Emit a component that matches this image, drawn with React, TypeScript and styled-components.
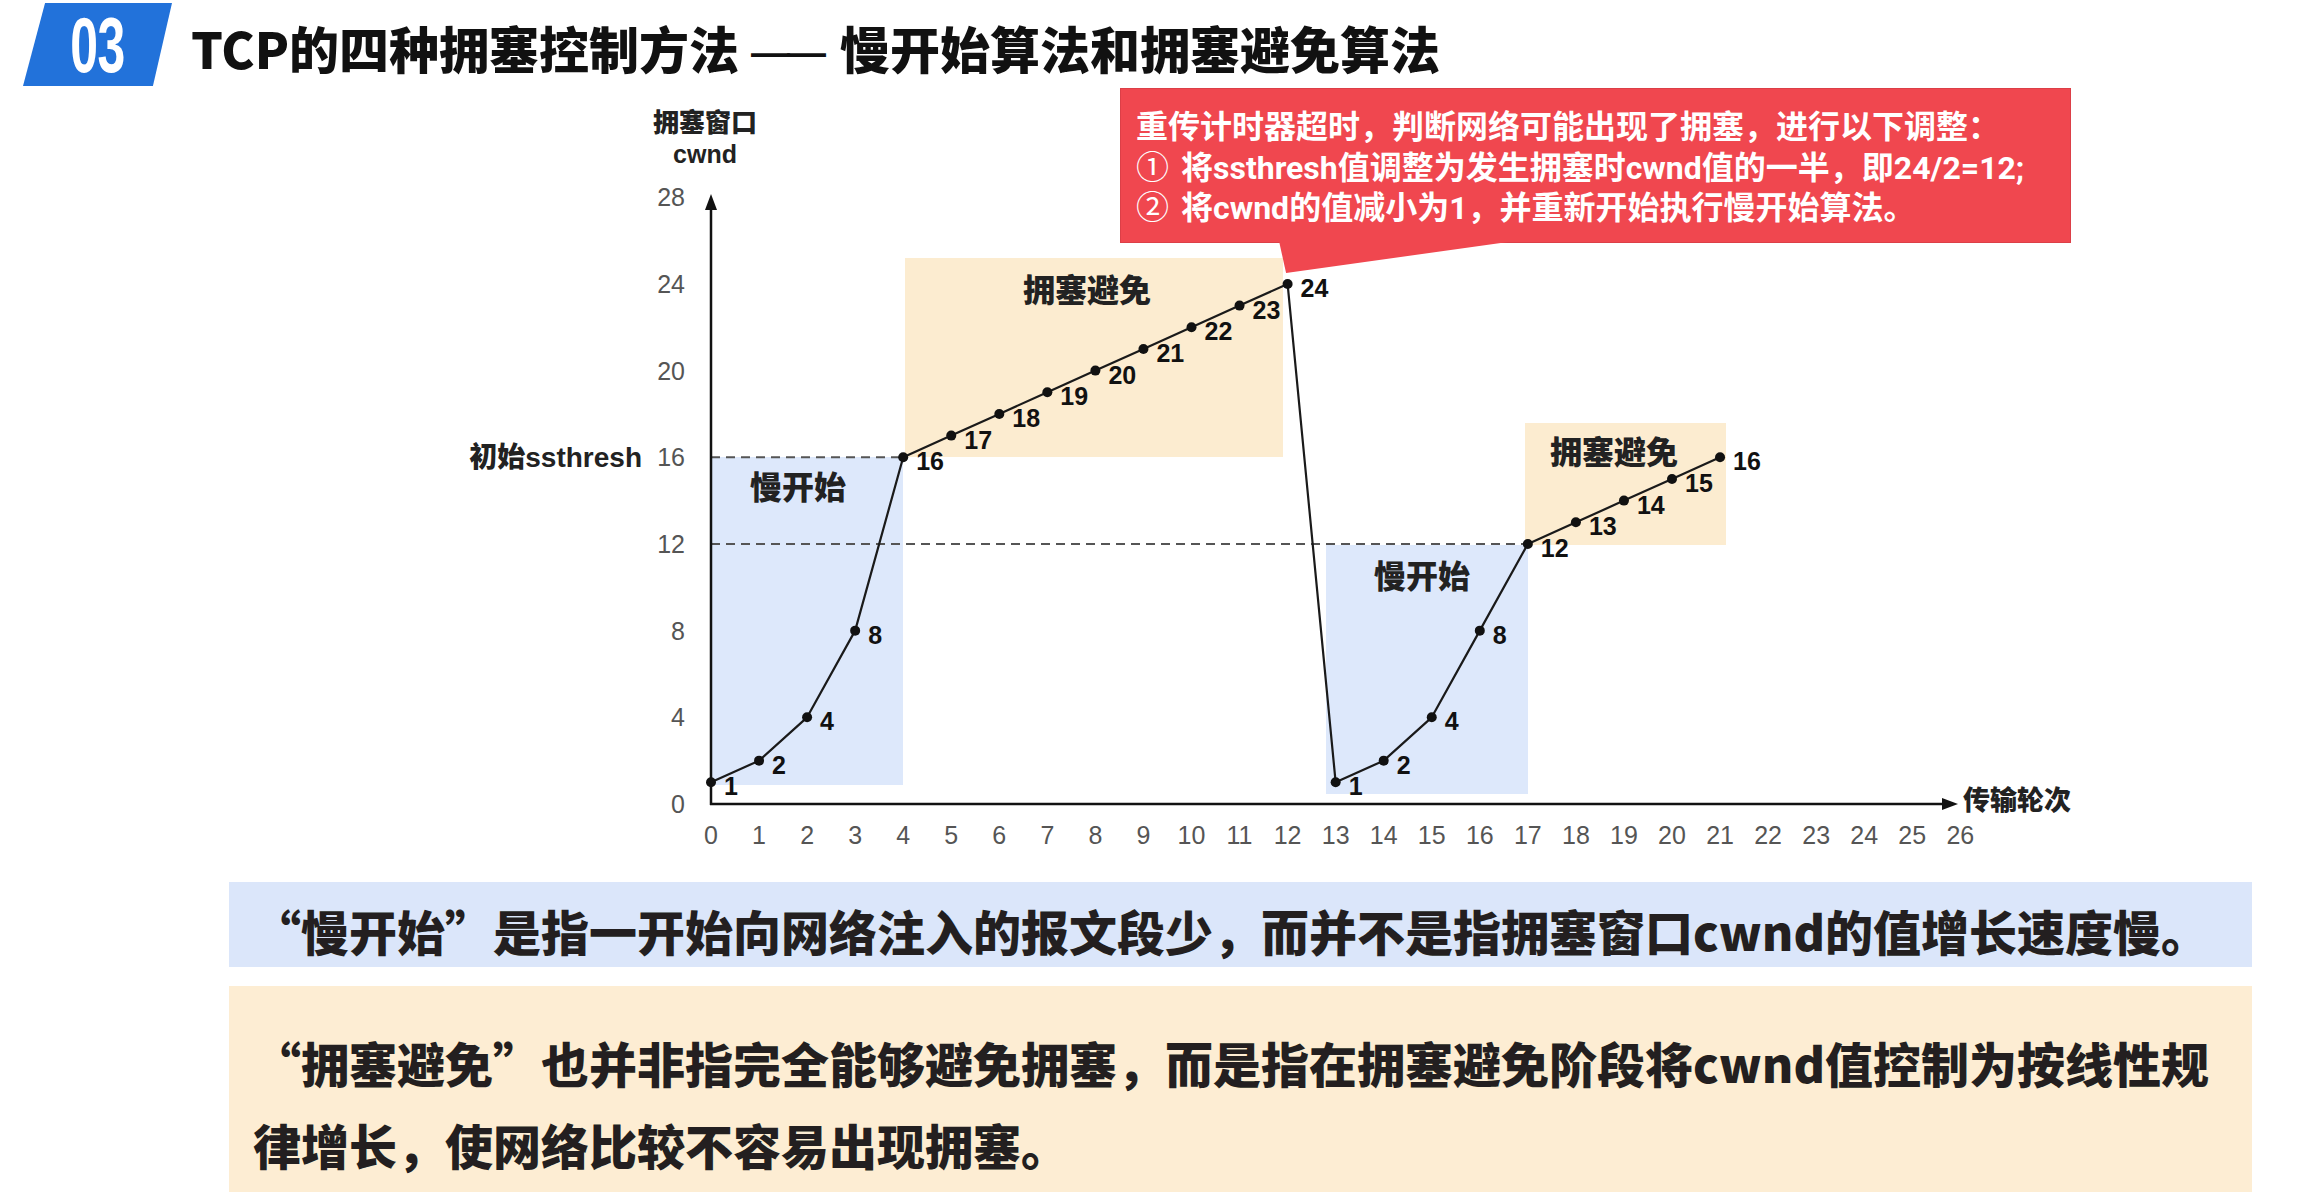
import React from 'react'
import styled, { createGlobalStyle } from 'styled-components'

const GlobalStyle = createGlobalStyle`
  html, body {
    margin: 0;
    padding: 0;
    background: #fff;
  }
  body {
    font-family: "Noto Sans CJK SC", "Noto Sans", sans-serif;
    overflow: hidden;
  }
`

const CJK = `"Noto Sans CJK SC", "Liberation Sans", sans-serif`
const LATIN = `"Liberation Sans", "Noto Sans CJK SC", sans-serif`

const Page = styled.div`
  width: 2303px;
  height: 1201px;
  overflow: hidden;
  background: #fff;
`

const Header = styled.header`
  display: flex;
  align-items: center;
  gap: 19px;
  height: 88px;
  padding: 3px 0 2px 23px;
  box-sizing: border-box;
`

const Badge = styled.div`
  width: 149px;
  height: 83px;
  background: #2272da;
  clip-path: polygon(14.8% 0, 100% 0, 87.2% 100%, 0 100%);
  display: flex;
  align-items: center;
  justify-content: center;
`

const BadgeNum = styled.span`
  font-family: "Liberation Sans", Arial, sans-serif;
  font-weight: 700;
  font-size: 78px;
  line-height: 1;
  color: #fff;
  transform: scaleX(0.64);
  letter-spacing: -1px;
`

const Title = styled.h1`
  margin: 4px 0 0;
  font-family: ${CJK};
  font-weight: 900;
  font-size: 50px;
  color: #111;
  white-space: nowrap;
`

const Dash = styled.span`
  font-family: "Liberation Sans", Arial, sans-serif;
  font-size: 39px;
  font-weight: 700;
  letter-spacing: -3px;
  margin: 0 17px 0 12px;
  position: relative;
  top: -3px;
`

const ChartArea = styled.section`
  position: relative;
  height: 794px;
`

const ChartSvg = styled.svg`
  display: block;
`

const Callout = styled.div`
  position: absolute;
  left: 1120px;
  top: 0;
  width: 951px;
  height: 155px;
  box-sizing: border-box;
  padding: 19px 15px 0;
  background: #f0474f;
  border: 1px solid #dc3f47;
  color: #fff;
  font-family: Roboto, "Noto Sans CJK SC", sans-serif;
  font-weight: 700;
  font-size: 32px;
  line-height: 39.5px;
  white-space: nowrap;

  &::after {
    content: '';
    position: absolute;
    top: calc(100% - 1px);
    left: 158px;
    width: 236px;
    height: 32px;
    background: #f0474f;
    clip-path: polygon(0 0, 3% 100%, 100% 0);
  }
`

const CalloutLine = styled.div``

const Num = styled.span`
  font-weight: 400;
  font-size: 33px;
  margin-right: 12px;
`

const Bands = styled.div`
  display: flex;
  flex-direction: column;
  gap: 19px;
  margin-left: 229px;
  width: 2023px;
`

const Band = styled.div<{ $tone: 'blue' | 'orange' }>`
  box-sizing: border-box;
  background: ${(p) => (p.$tone === 'blue' ? '#dbe6fa' : '#fdedd3')};
  font-family: ${CJK};
  font-weight: 900;
  font-size: 48px;
  color: #231f20;
  white-space: nowrap;
  ${(p) =>
    p.$tone === 'blue'
      ? `height: 85px; padding: 10px 0 0 24px; display: flex; align-items: center;`
      : `height: 206px; padding: 35px 57px 0 24px; line-height: 82px;`}
`

const BandLine = styled.span<{ $justify?: boolean }>`
  display: block;
  text-align: ${(p) => (p.$justify ? 'justify' : 'left')};
  text-align-last: ${(p) => (p.$justify ? 'justify' : 'auto')};
`

const Quote = styled.span<{ $open?: boolean }>`
  display: inline-block;
  width: 1em;
  text-align: ${(p) => (p.$open ? 'right' : 'left')};
`

const TickLabel = styled.text`
  font-family: "Liberation Sans", Arial, sans-serif;
  font-size: 25px;
  fill: #555;
  dominant-baseline: central;
`

const PointLabel = styled.text`
  font-family: "Liberation Sans", Arial, sans-serif;
  font-weight: 700;
  font-size: 25px;
  fill: #111;
  dominant-baseline: central;
`

const ZoneLabel = styled.text<{ $size?: number }>`
  font-family: ${CJK};
  font-weight: 900;
  font-size: ${(p) => p.$size ?? 32}px;
  fill: #222;
  dominant-baseline: central;
`

const Zone = styled.rect<{ $tone: 'blue' | 'orange' }>`
  fill: ${(p) => (p.$tone === 'blue' ? '#dde8fb' : '#fcecd0')};
`

const Guide = styled.line`
  stroke: #555;
  stroke-width: 2;
  stroke-dasharray: 9 6;
`

const Axis = styled.line`
  stroke: #111;
  stroke-width: 2.5;
`

const Curve = styled.polyline`
  fill: none;
  stroke: #1a1a1a;
  stroke-width: 2.2;
  stroke-linejoin: round;
`

const X = (i: number) => 711 + i * 48.05
const Y = (v: number) => 804 - v * 21.67

const points: [number, number][] = [
  [0, 1], [1, 2], [2, 4], [3, 8], [4, 16], [5, 17], [6, 18], [7, 19], [8, 20],
  [9, 21], [10, 22], [11, 23], [12, 24], [13, 1], [14, 2], [15, 4], [16, 8],
  [17, 12], [18, 13], [19, 14], [20, 15], [21, 16],
]

const zones = [
  { tone: 'blue' as const, x: 711, y: 457, w: 192, h: 328, label: '慢开始', lx: 798, ly: 485 },
  { tone: 'orange' as const, x: 905, y: 258, w: 378, h: 199, label: '拥塞避免', lx: 1087, ly: 288 },
  { tone: 'blue' as const, x: 1326, y: 545, w: 202, h: 249, label: '慢开始', lx: 1422, ly: 574 },
  { tone: 'orange' as const, x: 1525, y: 423, w: 201, h: 122, label: '拥塞避免', lx: 1614, ly: 450 },
]

const Chart = () => (
  <ChartSvg width={2303} height={794} viewBox="0 88 2303 794">
    {zones.map((z, i) => (
      <Zone key={i} $tone={z.tone} x={z.x} y={z.y} width={z.w} height={z.h} />
    ))}
    {zones.map((z, i) => (
      <ZoneLabel key={i} x={z.lx} y={z.ly} textAnchor="middle">
        {z.label}
      </ZoneLabel>
    ))}

    <Guide x1={711} y1={Y(16)} x2={X(4)} y2={Y(16)} />
    <Guide x1={711} y1={Y(12)} x2={X(17)} y2={Y(12)} />

    <Axis x1={711} y1={805} x2={711} y2={206} />
    <polygon points="711,194 705,210 717,210" fill="#111" />
    <Axis x1={710} y1={804} x2={1946} y2={804} />
    <polygon points="1958,804 1942,798 1942,810" fill="#111" />

    <ZoneLabel x={705} y={120} textAnchor="middle" $size={26}>拥塞窗口</ZoneLabel>
    <TickLabel x={705} y={154} textAnchor="middle" style={{ fill: '#222', fontWeight: 700 }}>
      cwnd
    </TickLabel>
    <ZoneLabel x={1963} y={798} $size={27}>传输轮次</ZoneLabel>
    <ZoneLabel x={642} y={457} textAnchor="end" $size={28} style={{ fontFamily: LATIN }}>
      初始ssthresh
    </ZoneLabel>

    {[0, 4, 8, 12, 16, 20, 24, 28].map((v) => (
      <TickLabel key={v} x={685} y={Y(v)} textAnchor="end">
        {v}
      </TickLabel>
    ))}
    {Array.from({ length: 27 }, (_, i) => (
      <TickLabel key={i} x={X(i)} y={835} textAnchor="middle">
        {i}
      </TickLabel>
    ))}

    <Curve points={points.map(([i, v]) => `${X(i)},${Y(v)}`).join(' ')} />
    {points.map(([i, v], k) => (
      <circle key={k} cx={X(i)} cy={Y(v)} r={5} fill="#111" />
    ))}
    {points.map(([i, v], k) => (
      <PointLabel key={k} x={X(i) + 13} y={Y(v) + 4}>
        {v}
      </PointLabel>
    ))}
  </ChartSvg>
)

export default function App() {
  return (
    <Page>
      <GlobalStyle />
      <Header>
        <Badge>
          <BadgeNum>03</BadgeNum>
        </Badge>
        <Title>
          TCP的四种拥塞控制方法<Dash>——</Dash>慢开始算法和拥塞避免算法
        </Title>
      </Header>

      <ChartArea>
        <Chart />
        <Callout>
          <CalloutLine>重传计时器超时，判断网络可能出现了拥塞，进行以下调整：</CalloutLine>
          <CalloutLine>
            <Num>①</Num>将ssthresh值调整为发生拥塞时cwnd值的一半，即24/2=12;
          </CalloutLine>
          <CalloutLine>
            <Num>②</Num>将cwnd的值减小为1，并重新开始执行慢开始算法。
          </CalloutLine>
        </Callout>
      </ChartArea>

      <Bands>
        <Band $tone="blue">
          <span>
            <Quote $open>“</Quote>慢开始<Quote>”</Quote>是指一开始向网络注入的报文段少，而并不是指拥塞窗口cwnd的值增长速度慢。
          </span>
        </Band>
        <Band $tone="orange">
          <BandLine $justify>
            <Quote $open>“</Quote>拥塞避免<Quote>”</Quote>也并非指完全能够避免拥塞，而是指在拥塞避免阶段将cwnd值控制为按线性规
          </BandLine>
          <BandLine>律增长，使网络比较不容易出现拥塞。</BandLine>
        </Band>
      </Bands>
    </Page>
  )
}
